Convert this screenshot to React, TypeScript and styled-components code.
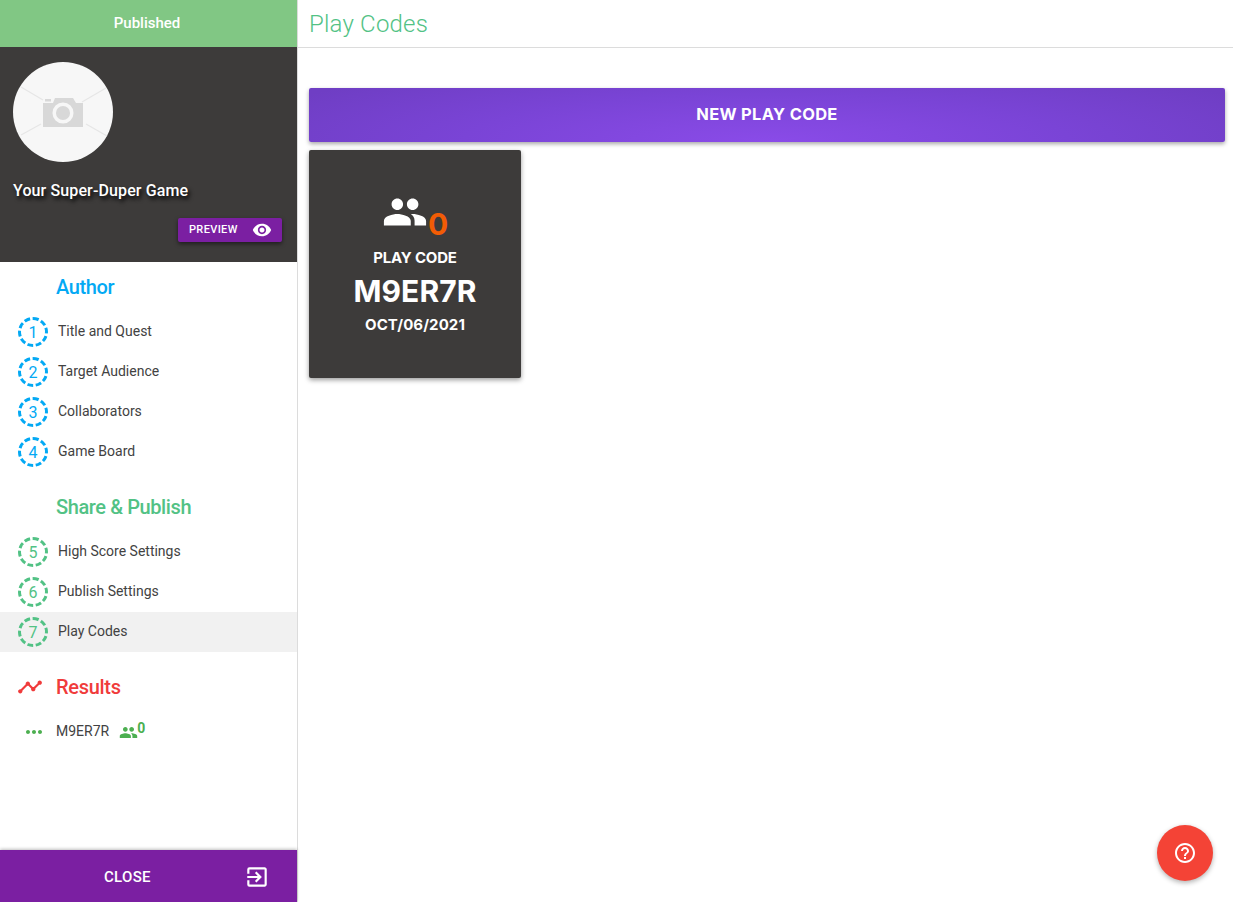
import React from "react";
import styled, { createGlobalStyle } from "styled-components";
import {
  MdExitToApp,
  MdHelpOutline,
  MdMoreHoriz,
  MdPeople,
  MdTimeline,
  MdVisibility,
} from "react-icons/md";

const BLUE = "#03a9f4";
const GREEN = "#52c285";
const RED = "#f03b3b";
const PURPLE = "#7b1fa2";
const DARK = "#3d3b3a";

const GlobalStyle = createGlobalStyle`
  html, body {
    margin: 0;
    padding: 0;
    height: 100%;
    background: #fff;
    font-family: Roboto, "Liberation Sans", sans-serif;
  }
  #root { height: 100%; }
  * { box-sizing: border-box; }
`;

const Page = styled.div`
  display: flex;
  height: 902px;
  overflow: hidden;
`;

const Sidebar = styled.aside`
  width: 298px;
  flex: none;
  display: flex;
  flex-direction: column;
  border-right: 1px solid #dcdcdc;
`;

const StatusBar = styled.div`
  height: 47px;
  flex: none;
  display: flex;
  align-items: center;
  justify-content: center;
  padding: 0 3px 2px 0;
  background: #81c784;
  color: #fff;
  font-size: 15px;
  font-weight: 500;
`;

const Hero = styled.div`
  height: 215px;
  flex: none;
  display: flex;
  flex-direction: column;
  padding: 15px 15px 20px 13px;
  background: ${DARK};
`;

const Avatar = styled.svg`
  display: block;
  width: 100px;
  height: 100px;
`;

const GameTitle = styled.div`
  margin-top: 18px;
  height: 21px;
  line-height: 21px;
  color: #fff;
  font-size: 16px;
  font-weight: 500;
  letter-spacing: 0.12px;
  text-shadow: 2px 3px 4px #000;
`;

const PreviewButton = styled.button`
  align-self: flex-end;
  margin-top: auto;
  width: 104px;
  height: 24px;
  padding: 0 10px 1px 11px;
  display: flex;
  align-items: center;
  justify-content: space-between;
  border: 0;
  border-radius: 2px;
  background: ${PURPLE};
  color: #fff;
  font-family: inherit;
  font-size: 11px;
  font-weight: 500;
  letter-spacing: 0.35px;
  box-shadow: 0 2px 4px rgba(0, 0, 0, 0.5);
`;

const Nav = styled.nav`
  flex: 1;
  min-height: 0;
  display: flex;
  flex-direction: column;
`;

const SectionHeading = styled.div<{ $color: string; $spaced?: boolean }>`
  height: 50px;
  margin-top: ${(p) => (p.$spaced ? "10px" : "0")};
  display: flex;
  align-items: center;
  gap: 13px;
  padding-left: 56px;
  color: ${(p) => p.$color};
  font-size: 20px;
  font-weight: 500;
  letter-spacing: -0.4px;
`;

const ResultsHeading = styled(SectionHeading)`
  padding-left: 17px;
  letter-spacing: -0.3px;
`;

const StepRow = styled.div<{ $active?: boolean }>`
  height: 40px;
  display: flex;
  align-items: center;
  gap: 10px;
  padding-left: 18px;
  background: ${(p) => (p.$active ? "#f1f1f1" : "transparent")};
  color: #424242;
  font-size: 14px;
`;

const StepLabel = styled.span`
  padding-bottom: 2px;
`;

const StepBadge = styled.span<{ $color: string }>`
  width: 30px;
  height: 30px;
  flex: none;
  display: flex;
  align-items: center;
  justify-content: center;
  border: 3px dashed ${(p) => p.$color};
  border-radius: 50%;
  color: ${(p) => p.$color};
  font-size: 16px;
  font-weight: 400;
`;

const ResultRow = styled.div`
  height: 40px;
  display: flex;
  align-items: center;
  padding-left: 22px;
  color: #424242;
  font-size: 14px;
`;

const ResultCode = styled.span`
  margin-left: 10px;
  margin-right: 10px;
  padding-bottom: 2px;
`;

const ResultCount = styled.span`
  display: flex;
  align-items: flex-start;
  color: #4caf50;
`;

const ResultCountValue = styled.span`
  margin: -2px 0 0 -1px;
  font-size: 14px;
  line-height: 14px;
  font-weight: 700;
`;

const CloseBar = styled.button`
  position: relative;
  height: 52px;
  flex: none;
  display: flex;
  align-items: center;
  padding: 1px 27px 0 104px;
  justify-content: space-between;
  border: 0;
  background: ${PURPLE};
  color: #fff;
  font-family: inherit;
  font-size: 15px;
  font-weight: 500;
  letter-spacing: 0.3px;
  box-shadow: 0 -1px 3px rgba(0, 0, 0, 0.25);
`;

const Main = styled.main`
  flex: 1;
  min-width: 0;
  display: flex;
  flex-direction: column;
`;

const TopBar = styled.header`
  height: 48px;
  flex: none;
  display: flex;
  align-items: center;
  padding-left: 11px;
  border-bottom: 1px solid #dcdcdc;
  color: ${GREEN};
  font-size: 24px;
  font-weight: 300;
  letter-spacing: 0.2px;
`;

const Content = styled.div`
  flex: 1;
  display: flex;
  flex-direction: column;
  align-items: flex-start;
  gap: 8px;
  padding: 40px 8px 0 11px;
`;

const NewCodeButton = styled.button`
  width: 100%;
  height: 54px;
  padding: 0 0 2px;
  border: 0;
  border-radius: 2px;
  background: radial-gradient(ellipse 60% 160% at 50% 100%, #8a4be8 0%, #7a44d6 55%, #6f3ec4 100%);
  color: #fff;
  font-family: Inter, sans-serif;
  font-size: 16.5px;
  font-weight: 700;
  letter-spacing: 0.3px;
  box-shadow: 0 2px 4px rgba(0, 0, 0, 0.35);
`;

const CodeCard = styled.div`
  width: 212px;
  height: 228px;
  display: flex;
  flex-direction: column;
  align-items: center;
  padding-top: 39px;
  border-radius: 2px;
  background: ${DARK};
  color: #fff;
  font-family: Inter, sans-serif;
  box-shadow: 0 2px 5px rgba(0, 0, 0, 0.4);
`;

const PlayerCount = styled.div`
  display: flex;
  align-items: flex-end;
  height: 46px;
`;

const PlayerCountValue = styled.span`
  margin-bottom: -4px;
  color: #f25c05;
  font-size: 30px;
  line-height: 30px;
  font-weight: 700;
`;

const CardLabel = styled.div`
  margin-top: 13px;
  height: 20px;
  line-height: 20px;
  font-size: 15px;
  font-weight: 700;
  letter-spacing: -0.2px;
`;

const CardCode = styled.div`
  margin-top: 6px;
  height: 34px;
  line-height: 34px;
  font-size: 30px;
  font-weight: 700;
  letter-spacing: 0.1px;
`;

const CardDate = styled.div`
  margin-top: 7px;
  height: 20px;
  line-height: 20px;
  font-size: 15px;
  font-weight: 700;
  letter-spacing: 0.1px;
`;

const HelpButton = styled.button`
  position: absolute;
  right: 20px;
  bottom: 21px;
  width: 56px;
  height: 56px;
  display: flex;
  align-items: center;
  justify-content: center;
  padding: 0;
  border: 0;
  border-radius: 50%;
  background: #f44336;
  color: #fff;
  box-shadow: 0 2px 5px rgba(0, 0, 0, 0.3);
`;

const authorSteps = ["Title and Quest", "Target Audience", "Collaborators", "Game Board"];
const publishSteps = ["High Score Settings", "Publish Settings", "Play Codes"];

function CameraPlaceholder() {
  return (
    <Avatar viewBox="0 0 100 100">
      <circle cx="50" cy="50" r="50" fill="#f7f7f7" />
      <g stroke="#e6e6e6" strokeWidth="1.2">
        <line x1="8" y1="25" x2="30" y2="38" />
        <line x1="69" y1="40" x2="93" y2="26" />
        <line x1="8" y1="73" x2="28" y2="62" />
        <line x1="73" y1="62" x2="94" y2="74" />
      </g>
      <path d="M30 41h10l2-5h18l3 5h7v24H30z" fill="#d8d8d8" />
      <rect x="32" y="37" width="6" height="2.5" fill="#d8d8d8" />
      <circle cx="50" cy="51" r="8.8" fill="#d8d8d8" stroke="#f7f7f7" strokeWidth="3.5" />
    </Avatar>
  );
}

export default function App() {
  return (
    <Page>
      <GlobalStyle />
      <Sidebar>
        <StatusBar>Published</StatusBar>
        <Hero>
          <CameraPlaceholder />
          <GameTitle>Your Super-Duper Game</GameTitle>
          <PreviewButton>
            PREVIEW
            <MdVisibility size={20} />
          </PreviewButton>
        </Hero>
        <Nav>
          <SectionHeading $color={BLUE}>Author</SectionHeading>
          {authorSteps.map((step, i) => (
            <StepRow key={step}>
              <StepBadge $color={BLUE}>{i + 1}</StepBadge>
              <StepLabel>{step}</StepLabel>
            </StepRow>
          ))}
          <SectionHeading $color={GREEN} $spaced>
            Share &amp; Publish
          </SectionHeading>
          {publishSteps.map((step, i) => (
            <StepRow key={step} $active={step === "Play Codes"}>
              <StepBadge $color={GREEN}>{i + 5}</StepBadge>
              <StepLabel>{step}</StepLabel>
            </StepRow>
          ))}
          <ResultsHeading $color={RED} $spaced>
            <MdTimeline size={26} />
            Results
          </ResultsHeading>
          <ResultRow>
            <MdMoreHoriz size={24} color="#4caf50" />
            <ResultCode>M9ER7R</ResultCode>
            <ResultCount>
              <MdPeople size={19} />
              <ResultCountValue>0</ResultCountValue>
            </ResultCount>
          </ResultRow>
        </Nav>
        <CloseBar>
          CLOSE
          <MdExitToApp size={26} />
        </CloseBar>
      </Sidebar>
      <Main>
        <TopBar>Play Codes</TopBar>
        <Content>
          <NewCodeButton>NEW PLAY CODE</NewCodeButton>
          <CodeCard>
            <PlayerCount>
              <MdPeople size={46} color="#fff" />
              <PlayerCountValue>0</PlayerCountValue>
            </PlayerCount>
            <CardLabel>PLAY CODE</CardLabel>
            <CardCode>M9ER7R</CardCode>
            <CardDate>OCT/06/2021</CardDate>
          </CodeCard>
        </Content>
      </Main>
      <HelpButton aria-label="Help">
        <MdHelpOutline size={24} />
      </HelpButton>
    </Page>
  );
}
